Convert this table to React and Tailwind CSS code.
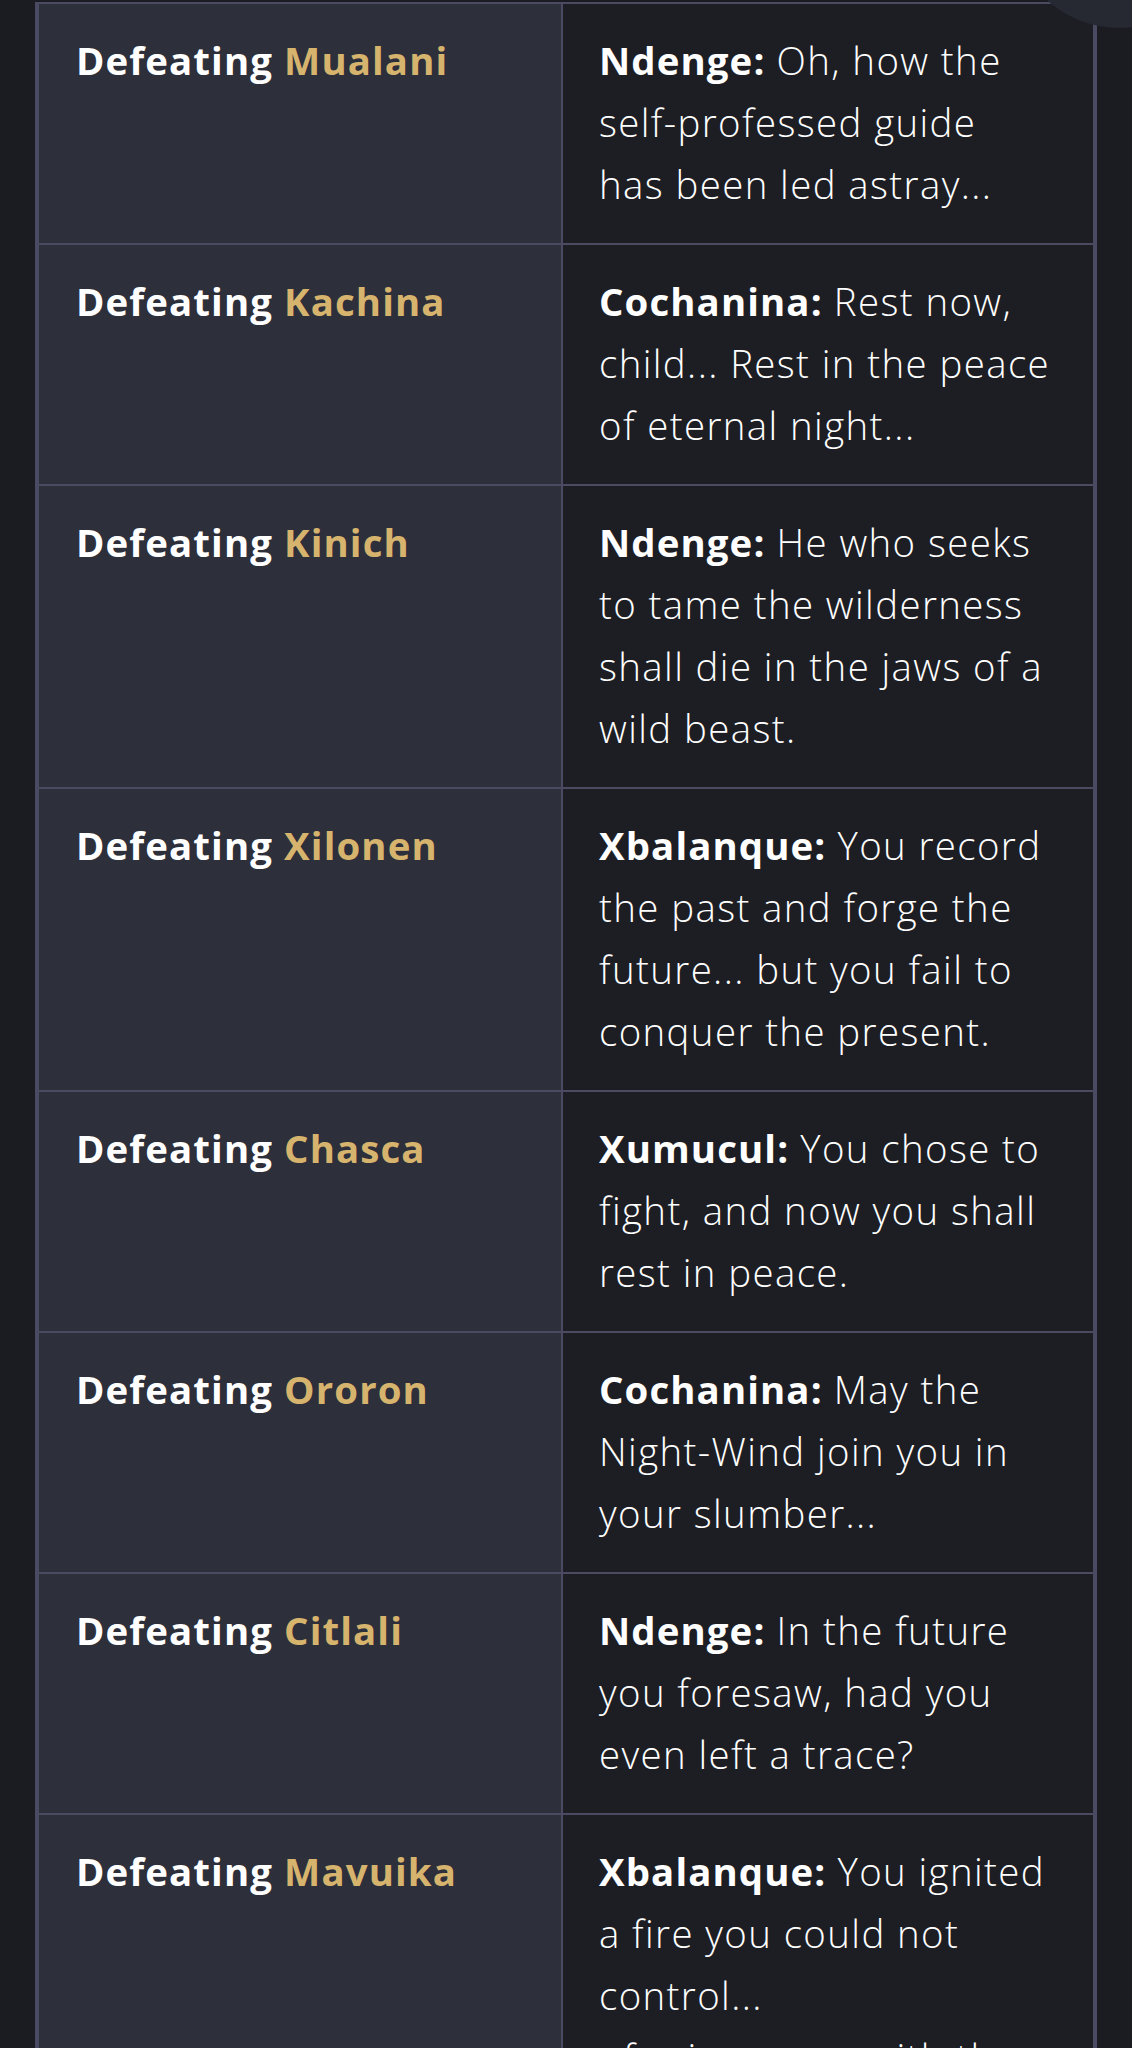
const rows = [
  { name: "Mualani", who: "Ndenge:", lines: ["Oh, how the", "self-professed guide", "has been led astray..."] },
  { name: "Kachina", who: "Cochanina:", lines: ["Rest now,", "child... Rest in the peace", "of eternal night..."] },
  { name: "Kinich", who: "Ndenge:", lines: ["He who seeks", "to tame the wilderness", "shall die in the jaws of a", "wild beast."] },
  { name: "Xilonen", who: "Xbalanque:", lines: ["You record", "the past and forge the", "future... but you fail to", "conquer the present."] },
  { name: "Chasca", who: "Xumucul:", lines: ["You chose to", "fight, and now you shall", "rest in peace."] },
  { name: "Ororon", who: "Cochanina:", lines: ["May the", "Night-Wind join you in", "your slumber..."] },
  { name: "Citlali", who: "Ndenge:", lines: ["In the future", "you foresaw, had you", "even left a trace?"] },
  { name: "Mavuika", who: "Xbalanque:", lines: ["You ignited", "a fire you could not", "control...", "of ruin as one with the"] },
]

const Row = ({ name, who, lines }) => (
  <div className="grid grid-cols-[524px_1fr] border-b-2 border-[#4a4b62]">
    <div className="bg-[#2d2f3b] border-r-2 border-[#4a4b62] pl-[37px] pr-4 pt-[25px] pb-[28px]">
      <p className="font-bold tracking-[1.1px] text-white">
        Defeating <span className="text-[#d6b46e]">{name}</span>
      </p>
    </div>
    <div className="bg-[#1d1e24] pl-[36px] pr-2 pt-[25px] pb-[28px]">
      {lines.map((line, i) => (
        <p key={i} className="whitespace-nowrap font-light tracking-[1.4px] text-white">
          {i === 0 && <span className="font-bold tracking-[1.1px]">{who} </span>}
          {line}
        </p>
      ))}
    </div>
  </div>
)

export default function App() {
  return (
    <div
      className="relative h-[2048px] overflow-hidden bg-[#1b1c21] px-[35px] pt-[2px] text-[38.4px] leading-[62px]"
      style={{ fontFamily: "'Open Sans', 'Noto Sans', sans-serif" }}
    >
      <div className="border-x-4 border-t-2 border-[#4a4b62]">
        {rows.map((r) => (
          <Row key={r.name} {...r} />
        ))}
      </div>

      {/* floating button peeking in from the top corner */}
      <div className="absolute left-[1010px] top-[-192px] h-[220px] w-[220px] rounded-full bg-[#272932]" />
    </div>
  )
}
